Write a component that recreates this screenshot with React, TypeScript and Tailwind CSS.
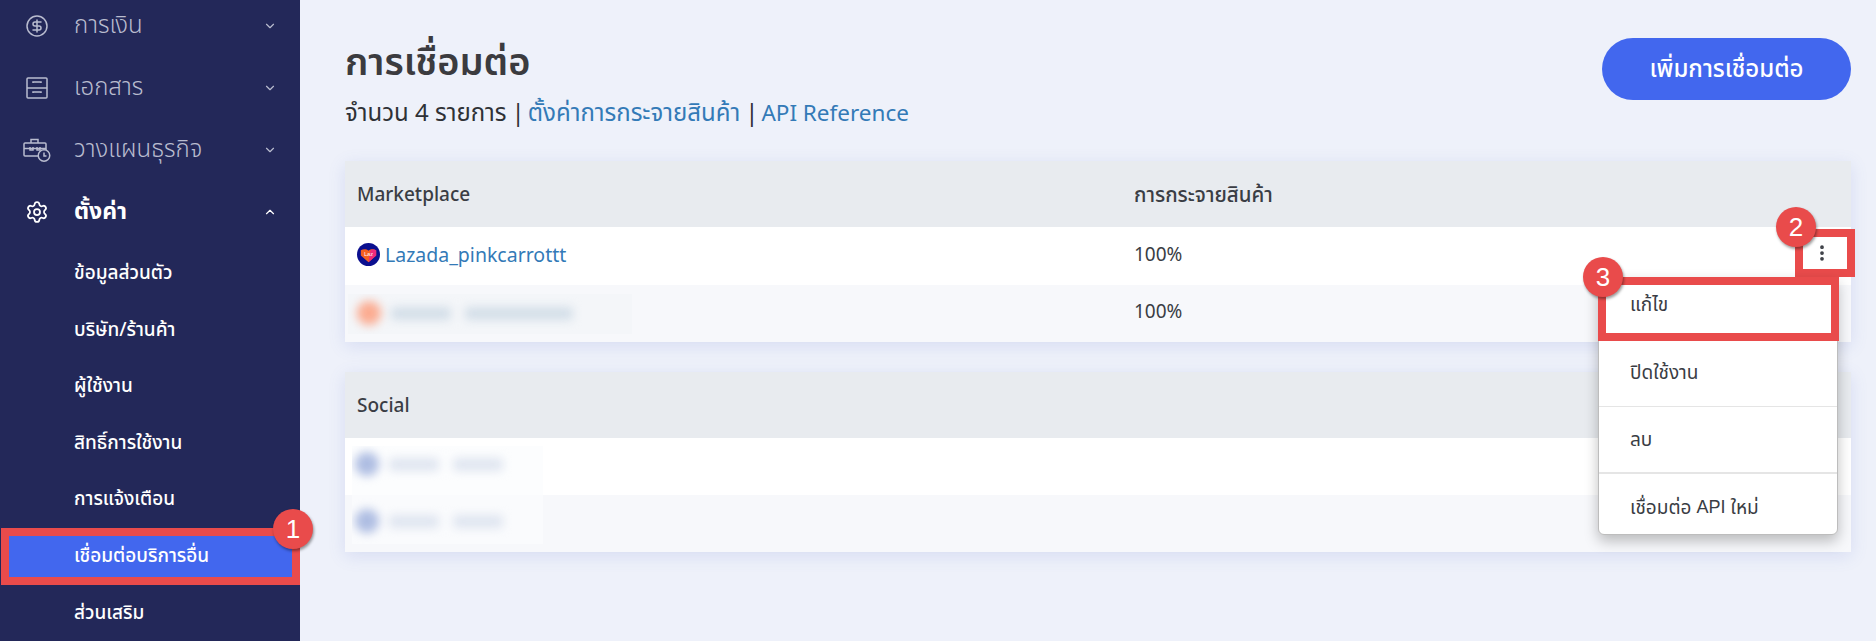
import { ChevronDown, ChevronUp, CircleDollarSign, Settings, EllipsisVertical } from 'lucide-react';

const font = { fontFamily: '"Noto Sans", "Noto Sans Thai", "Liberation Sans", sans-serif' };

function CabinetIcon() {
  return (
    <svg viewBox="0 0 22 22" className="w-[22px] h-[22px]" fill="none" stroke="currentColor" strokeWidth="1.5">
      <rect x="1" y="1" width="20" height="20" rx="1" />
      <path d="M1 11h20" />
      <path d="M7 6V5h8v1M7 16v-1h8v1" />
    </svg>
  );
}

function BriefcaseClockIcon() {
  return (
    <svg viewBox="0 0 28 24" className="w-[28px] h-[24px]" fill="none" stroke="currentColor" strokeWidth="1.5">
      <path d="M15 18H2a1 1 0 0 1-1-1V6a1 1 0 0 1 1-1h20a1 1 0 0 1 1 1v6" />
      <path d="M8 5V1.500h7V5" />
      <path d="M1 10.500h22" />
      <path d="M7 9v3h3V9M14 9v3h3V9" />
      <circle cx="21" cy="17.500" r="5.750" />
      <path d="M21 14.500v3.500h2.500" />
    </svg>
  );
}

function MainItem({ icon, label, open, active }: any) {
  return (
    <div className={`h-[62px] flex items-center ${active ? 'text-white' : 'text-[#b9bccf]'}`}>
      <div className="w-[74px] flex justify-center pb-[1px] shrink-0">{icon}</div>
      <span className={`flex-1 pb-[4px] ${active ? 'text-[23px] font-bold' : 'text-[24px] font-light'}`}>{label}</span>
      {open ? <ChevronUp className="w-[14px] h-[14px] mr-[23px]" /> : <ChevronDown className="w-[14px] h-[14px] mr-[23px]" />}
    </div>
  );
}

function SubItem({ label }: any) {
  return <div className="h-[56.500px] flex items-center pl-[74px] pb-[2px] text-white text-[19px] font-medium">{label}</div>;
}

function Badge({ n, className }: any) {
  return (
    <div className={`absolute w-[40px] h-[40px] rounded-full bg-[#e94b4b] text-white text-[26px] flex items-center justify-center shadow-[1px_2px_3px_rgba(0,0,0,0.4)] ${className}`} style={{ fontFamily: '"Liberation Sans", sans-serif' }}>
      {n}
    </div>
  );
}

function TableHead({ first, second }: any) {
  return (
    <div className="h-[66px] pt-[1px] bg-[#e8ebef] grid grid-cols-[789px_1fr] items-center text-[19px] font-medium text-[#3a3d44]">
      <div className="pl-[12px]">{first}</div>
      <div className="text-[20.500px]">{second}</div>
    </div>
  );
}

function Smudge({ dot, tone, className }: any) {
  return (
    <div className={`absolute flex items-center blur-[5px] ${className}`}>
      <div className={`w-[24px] h-[24px] rounded-full ${dot}`} />
      <div className={`ml-[10px] h-[13px] w-[50px] rounded ${tone}`} />
      <div className={`ml-[14px] h-[13px] w-[50px] rounded ${tone}`} />
    </div>
  );
}

export default function App() {
  return (
    <div className="relative flex w-[1876px] h-[641px] overflow-hidden bg-[#eef1fa]" style={font}>
      <aside className="w-[300px] shrink-0 bg-[#232859] -mt-[5px]">
        <MainItem icon={<CircleDollarSign className="w-[24px] h-[24px]" strokeWidth={1.5} />} label="การเงิน" />
        <MainItem icon={<CabinetIcon />} label="เอกสาร" />
        <MainItem icon={<BriefcaseClockIcon />} label="วางแผนธุรกิจ" />
        <MainItem icon={<Settings className="w-[24px] h-[24px]" strokeWidth={1.75} />} label="ตั้งค่า" open active />
        <div className="pt-[2px]">
          <SubItem label="ข้อมูลส่วนตัว" />
          <SubItem label="บริษัท/ร้านค้า" />
          <SubItem label="ผู้ใช้งาน" />
          <SubItem label="สิทธิ์การใช้งาน" />
          <SubItem label="การแจ้งเตือน" />
          <div className="h-[57px] ml-[1px] border-[8px] border-[#e94b4b] bg-[#4267ee] flex items-center pl-[65px] pb-[2px] text-white text-[19px] font-medium">เชื่อมต่อบริการอื่น</div>
          <SubItem label="ส่วนเสริม" />
        </div>
      </aside>

      <main className="flex-1 pl-[45px] pr-[25px]">
        <div className="flex justify-between items-start h-[161px]">
          <div className="pt-[34px]">
            <h1 className="text-[38px] font-semibold leading-[52px] text-[#3b3b3f]">การเชื่อมต่อ</h1>
            <p className="text-[24px] leading-[30px] mt-[11px] text-[#2f3136]">
              จำนวน 4 รายการ<span className="ml-[5px] mr-[3px]">|</span><span className="text-[#337ab7]">ตั้งค่าการกระจายสินค้า</span><span className="ml-[5px] mr-[3px]">|</span><span className="text-[22.500px] text-[#337ab7]">API Reference</span>
            </p>
          </div>
          <button className="mt-[38px] w-[249px] h-[62px] rounded-full bg-[#4267ee] text-white text-[24px] font-medium pb-[2px]">เพิ่มการเชื่อมต่อ</button>
        </div>

        <div className="relative shadow-[0_4px_16px_rgba(90,110,200,0.15)]">
          <TableHead first="Marketplace" second="การกระจายสินค้า" />
          <div className="h-[58px] pb-[3px] bg-white grid grid-cols-[789px_1fr] items-center text-[19px] text-[#3a3d44]">
            <div className="pl-[12px] flex items-center gap-[5px] text-[#337ab7] text-[19.500px]">
              <svg viewBox="0 0 24 24" className="w-[23px] h-[23px]">
                <circle cx="12" cy="12" r="12" fill="#0b0f8f" />
                <path d="M12 20 4 13V7.500c3-1.500 6-1 8 .5 2-1.500 5-2 8-.5V13z" fill="#f5601f" />
                <path d="M12 20 20 13V7.500c-2-1-4-1-6 0z" fill="#ef2a7c" />
                <text x="12" y="14" textAnchor="middle" fontSize="6" fill="#fff">Laz</text>
              </svg>
              Lazada_pinkcarrottt
            </div>
            <div>100%</div>
          </div>
          <div className="h-[57px] pb-[5px] bg-[#f7f8fb] grid grid-cols-[789px_1fr] items-center text-[19px] text-[#3a3d44]">
            <div />
            <div>100%</div>
          </div>
          {/* blurred account name */}
          <div className="absolute left-[3px] top-[133px] w-[284px] h-[40px] bg-[#f4f6f9] overflow-hidden">
            <Smudge dot="bg-[#fbab90]" tone="bg-[#d3dee8]" className="left-[9px] top-[7px] [&>div:nth-child(3)]:w-[108px] [&>div:nth-child(2)]:w-[60px]" />
          </div>
        </div>

        <div className="relative mt-[30px] shadow-[0_4px_16px_rgba(90,110,200,0.15)]">
          <TableHead first="Social" />
          <div className="h-[57px] bg-white" />
          <div className="h-[57px] bg-[#f7f8fb]" />
          {/* blurred account names */}
          <div className="absolute left-[7px] top-[74px] w-[191px] h-[98px] bg-[#fbfcfd]/70 overflow-hidden">
            <Smudge dot="bg-[#aebde2]" tone="bg-[#dfe5f0]" className="left-[3px] top-[6px]" />
            <Smudge dot="bg-[#aebde2]" tone="bg-[#dfe5f0]" className="left-[3px] top-[63px]" />
          </div>
        </div>
      </main>

      {/* kebab highlight */}
      <div className="absolute left-[1795px] top-[229px] w-[60px] h-[48px] border-[8px] border-[#e94b4b] flex items-center justify-center pr-[7px] text-[#3a3d44]">
        <EllipsisVertical className="w-[20px] h-[20px]" strokeWidth={2.500} />
      </div>

      {/* dropdown */}
      <div className="absolute left-[1598px] top-[277px] w-[240px] rounded-b-[6px] bg-white border border-[#bdbdbd] shadow-[0_6px_14px_rgba(0,0,0,0.25)] text-[19px] text-[#3a3d44]">
        <div className="h-[62px] flex items-center pl-[31px] pb-[10px]">แก้ไข</div>
        <div className="h-[67px] flex items-center pl-[31px] pb-[1px] border-b border-[#e5e5e5]">ปิดใช้งาน</div>
        <div className="h-[67px] flex items-center pl-[31px] border-b-2 border-[#e5e5e5]">ลบ</div>
        <div className="h-[60px] flex items-center pl-[31px] pt-[6px]">
          เชื่อมต่อ <span className="mx-[5px] text-[18px]" style={{ fontFamily: '"Liberation Sans", sans-serif' }}>API</span> ใหม่
        </div>
      </div>
      <div className="absolute left-[1598px] top-[277px] w-[241px] h-[64px] border-[8px] border-[#e94b4b]" />

      <Badge n="1" className="left-[273px] top-[509px]" />
      <Badge n="2" className="left-[1776px] top-[207px]" />
      <Badge n="3" className="left-[1583px] top-[257px]" />
    </div>
  );
}
